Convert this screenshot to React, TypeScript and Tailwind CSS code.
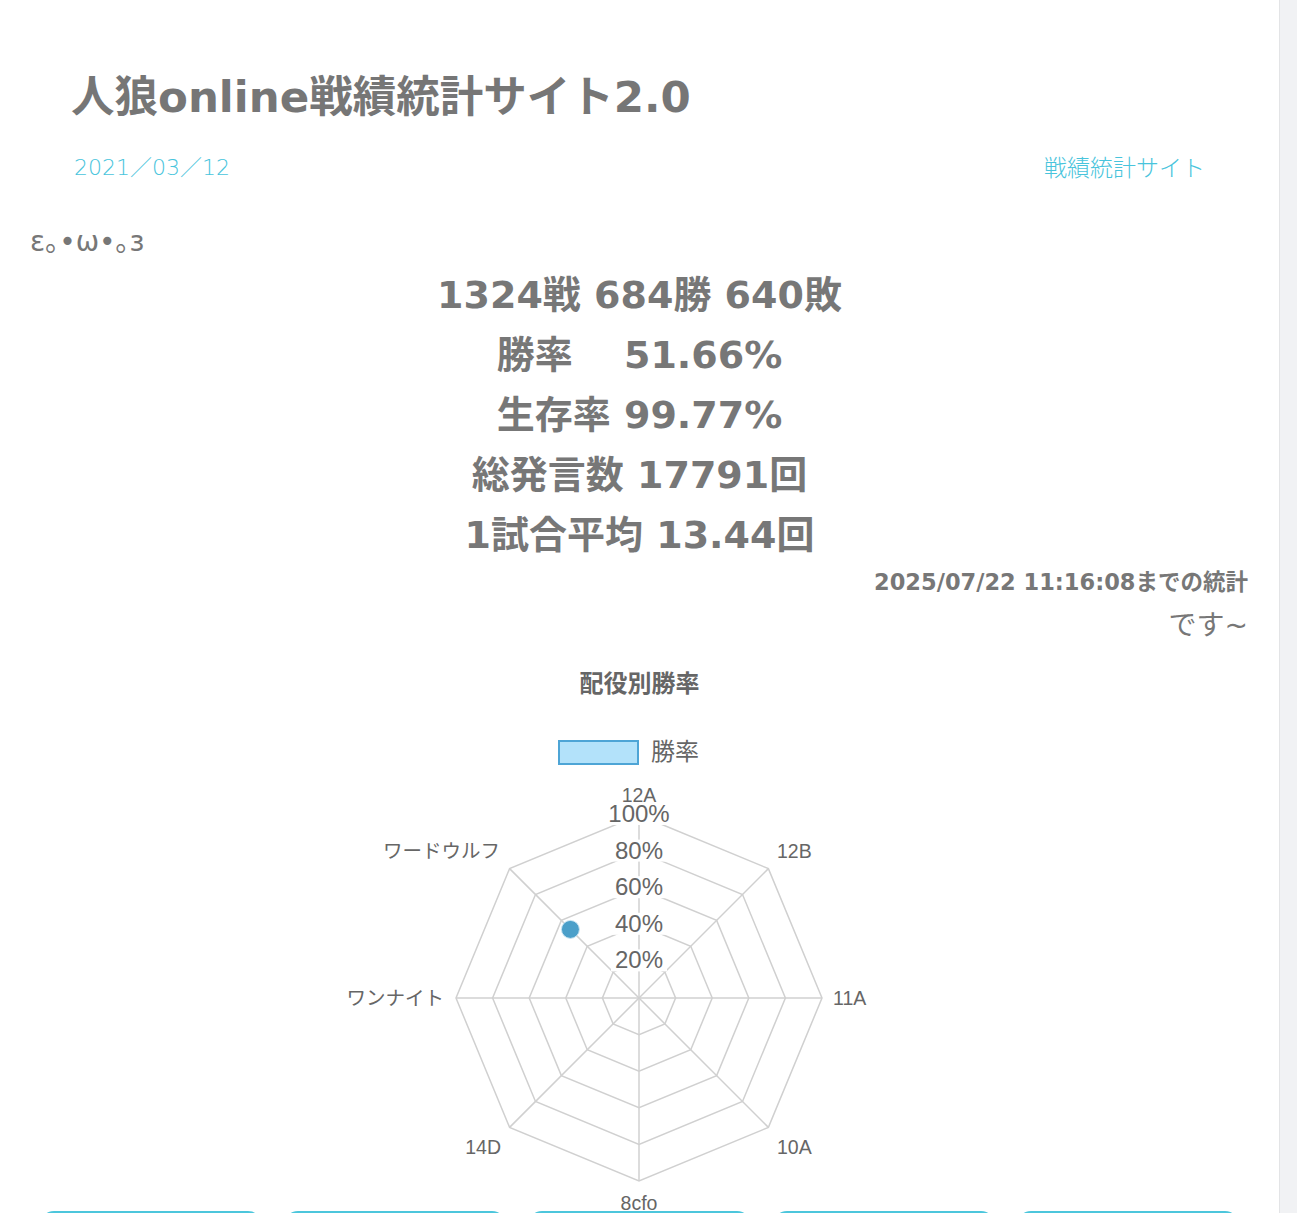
import React from "react";

const FONT = '"DejaVu Sans", "Noto Sans CJK JP", sans-serif';
const CHART_FONT = '"Liberation Sans", "Noto Sans CJK JP", sans-serif';

function Radar() {
  const W = 600;
  const H = 440;
  const cx = 299;
  const cy = 227;
  const R = 183;
  const labels = ["12A", "12B", "11A", "10A", "8cfo", "14D", "ワンナイト", "ワードウルフ"];
  const values = [0, 0, 0, 0, 0, 0, 0, 53];
  const ang = (i: number) => (-90 + i * 45) * (Math.PI / 180);
  const pt = (i: number, r: number) => [cx + r * Math.cos(ang(i)), cy + r * Math.sin(ang(i))];
  const rings = [1, 2, 3, 4, 5].map((k) => (R * k) / 5);
  const labelPos: { x: number; y: number; anchor: "start" | "middle" | "end" }[] = [
    { x: cx, y: cy - 202, anchor: "middle" },
    { x: cx + 138, y: cy - 146, anchor: "start" },
    { x: cx + 194, y: cy + 1, anchor: "start" },
    { x: cx + 138, y: cy + 150, anchor: "start" },
    { x: cx, y: cy + 206, anchor: "middle" },
    { x: cx - 138, y: cy + 150, anchor: "end" },
    { x: cx - 195, y: cy + 1, anchor: "end" },
    { x: cx - 139, y: cy - 146, anchor: "end" },
  ];
  const dp = pt(7, (R * values[7]) / 100);
  return (
    <svg width={W} height={H} viewBox={`0 0 ${W} ${H}`} className="block overflow-visible">
      {labels.map((_, i) => {
        const [x, y] = pt(i, R);
        return <line key={"a" + i} x1={cx} y1={cy} x2={x} y2={y} stroke="#d0d0d0" strokeWidth={1.5} />;
      })}
      {rings.map((r, k) => (
        <polygon
          key={"r" + k}
          points={labels.map((_, i) => pt(i, r).join(",")).join(" ")}
          fill="none"
          stroke="#d0d0d0"
          strokeWidth={1.5}
        />
      ))}
      {[20, 40, 60, 80, 100].map((v, k) => {
        const y = cy - rings[k];
        const w = v === 100 ? 68 : 56;
        return (
          <g key={"t" + v}>
            <rect x={cx - w / 2} y={y - 12} width={w} height={22} fill="#ffffff" />
            <text
              x={cx}
              y={y + 7}
              textAnchor="middle"
              fontSize={24}
              fill="#666666"
              style={{ fontFamily: CHART_FONT }}
            >
              {v}%
            </text>
          </g>
        );
      })}
      {labelPos.map((p, i) => (
        <text
          key={"l" + i}
          x={p.x}
          y={p.y + 6}
          textAnchor={p.anchor}
          fontSize={19.5}
          fill="#666666"
          style={{ fontFamily: CHART_FONT }}
        >
          {labels[i]}
        </text>
      ))}
      <circle cx={dp[0]} cy={dp[1]} r={9} fill="#4b9fc9" stroke="#cde6f3" strokeWidth={1} />
    </svg>
  );
}

export default function App() {
  return (
    <div className="flex min-h-[1213px] w-full bg-white" style={{ fontFamily: FONT }}>
      <div className="w-[1279px] shrink-0 bg-white text-[#777777]">
        <h1 className="ml-[71px] mt-[71px] text-[43.5px] font-bold leading-[52px] text-[#767676]">
          人狼online戦績統計サイト2.0
        </h1>
        <div className="mt-[30px] flex items-center justify-between pl-[74px] pr-[74px] leading-[30px]">
          <span className="text-[22px] font-light text-[#48c4dc]">2021／03／12</span>
          <span className="text-[23px] font-light text-[#48c4dc]">戦績統計サイト</span>
        </div>
        <div className="mt-[43px] pl-[30px] text-[28px] leading-[32px] text-[#777777]">ε｡•ω•｡з</div>
        <div className="mt-[7px] text-center text-[38px] font-bold leading-[60px] text-[#777777]">
          <div>1324戦 684勝 640敗</div>
          <div>勝率　 51.66%</div>
          <div>生存率 99.77%</div>
          <div>総発言数 17791回</div>
          <div>1試合平均 13.44回</div>
        </div>
        <div className="mt-[4px] pr-[31px] text-right text-[22.5px] font-bold leading-[26px] text-[#777777]">
          2025/07/22 11:16:08までの統計
        </div>
        <div className="mt-[14px] pr-[31px] text-right text-[28px] leading-[34px] text-[#777777]">です~</div>
        <div
          className="mt-[27px] text-center text-[24px] font-bold leading-[28px] text-[#666666]"
          style={{ fontFamily: CHART_FONT }}
        >
          配役別勝率
        </div>
        <div
          className="mt-[40px] flex items-center justify-center gap-[12px] pr-[22px]"
          style={{ fontFamily: CHART_FONT }}
        >
          <div className="h-[25px] w-[81px] border-2 border-[#4ea5d6] bg-[#b3e2fa]" />
          <span className="text-[24px] leading-[28px] text-[#666666]">勝率</span>
        </div>
        <div className="mt-[5px] flex justify-center">
          <Radar />
        </div>
        <div className="flex gap-[22px] px-[40px]">
          {[0, 1, 2, 3, 4].map((i) => (
            <div key={i} className="h-[60px] flex-1 rounded-[14px] border-2 border-[#4cc6dc]" />
          ))}
        </div>
      </div>
      <div className="w-[18px] shrink-0 border-l border-[#e3e4e6] bg-[#f1f2f4]" />
    </div>
  );
}
